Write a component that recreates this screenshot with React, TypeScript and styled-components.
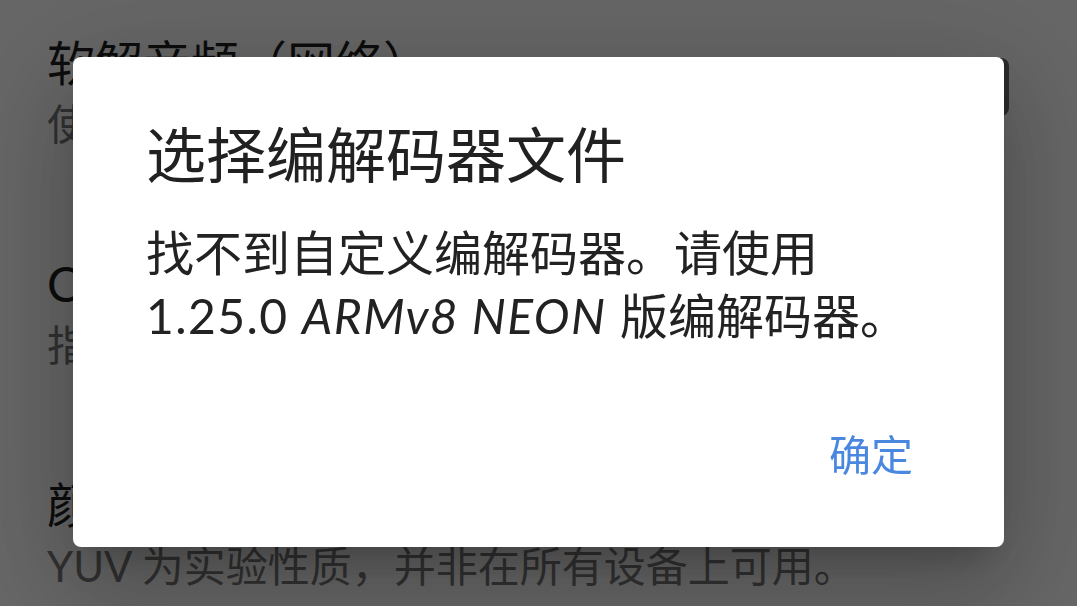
import React from "react";
import styled, { createGlobalStyle } from "styled-components";

const GlobalStyle = createGlobalStyle`
  html, body {
    margin: 0;
    padding: 0;
    background: #ffffff;
    overflow: hidden;
  }
  body {
    font-family: Lato, "Noto Sans CJK SC", sans-serif;
  }
`;

type Pref = {
  title: string;
  summary: string;
  toggle?: boolean;
};

const prefs: Pref[] = [
  { title: "软解音频（网络）", summary: "使用软件解码网络音频流", toggle: true },
  { title: "Codec 文件", summary: "指定自定义编解码器文件的路径" },
  { title: "颜色格式", summary: "YUV 为实验性质，并非在所有设备上可用。" },
];

export default function App() {
  return (
    <>
      <GlobalStyle />
      <SettingsList>
        {prefs.map((p) => (
          <PrefRow key={p.title}>
            <PrefText>
              <PrefTitle>{p.title}</PrefTitle>
              <PrefSummary>{p.summary}</PrefSummary>
            </PrefText>
            {p.toggle && <ToggleThumb />}
          </PrefRow>
        ))}
      </SettingsList>

      <Scrim>
        <Dialog role="dialog">
          <DialogTitle>选择编解码器文件</DialogTitle>
          <DialogBody>
            找不到自定义编解码器。请使用
            <br />
            <Latin>
              1.25.0 <em>ARMv8 NEON</em>{" "}
            </Latin>
            版编解码器。
          </DialogBody>
          <DialogActions>
            <TextButton>确定</TextButton>
          </DialogActions>
        </Dialog>
      </Scrim>
    </>
  );
}

const SettingsList = styled.div`
  display: flex;
  flex-direction: column;
  width: 100%;
  height: 100vh;
  overflow: hidden;
`;

const PrefRow = styled.div`
  display: flex;
  flex-shrink: 0;
  align-items: flex-start;
  box-sizing: border-box;
  height: 221px;
  padding: 32px 68px 0 47px;
`;

const PrefText = styled.div`
  display: flex;
  flex-direction: column;
  flex: 1;
  min-width: 0;
`;

const PrefTitle = styled.div`
  font-size: 48px;
  line-height: 62px;
  color: #1e1e1e;
  white-space: nowrap;
`;

const PrefSummary = styled.div`
  font-size: 42px;
  line-height: 60px;
  color: #7a7a7a;
  white-space: nowrap;
`;

const ToggleThumb = styled.div`
  width: 40px;
  height: 58px;
  margin-top: 26px;
  border-radius: 8px;
  background: #6c6c6c;
`;

const Scrim = styled.div`
  position: fixed;
  inset: 0;
  background: rgba(0, 0, 0, 0.6);
  display: flex;
  align-items: center;
  justify-content: center;
`;

const Dialog = styled.div`
  width: 931px;
  margin-bottom: 2px;
  box-sizing: border-box;
  padding: 59px 67px 56px 73px;
  background: #ffffff;
  border-radius: 8px;
  display: flex;
  flex-direction: column;
  box-shadow: 0 40px 90px 10px rgba(0, 0, 0, 0.14),
    0 20px 120px 20px rgba(0, 0, 0, 0.12), 0 22px 30px -14px rgba(0, 0, 0, 0.2);
`;

const DialogTitle = styled.h2`
  margin: 0;
  font-size: 60px;
  line-height: 78px;
  font-weight: 400;
  color: #212121;
`;

const DialogBody = styled.p`
  margin: 27px 0 0;
  font-size: 48px;
  line-height: 63px;
  color: #222222;
`;

const Latin = styled.span`
  letter-spacing: 1.4px;

  em {
    font-style: italic;
  }
`;

const DialogActions = styled.div`
  display: flex;
  justify-content: flex-end;
  margin-top: 72px;
`;

const TextButton = styled.button`
  border: none;
  background: transparent;
  padding: 15px 24px;
  font-family: inherit;
  font-size: 42px;
  line-height: 42px;
  color: #4a88e0;
  cursor: pointer;
`;
